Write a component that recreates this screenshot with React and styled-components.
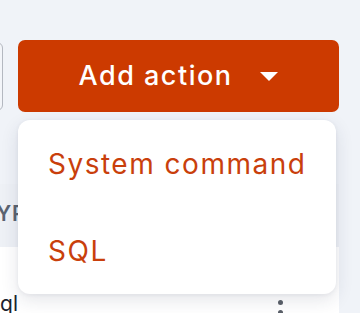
import React from "react";
import styled, { createGlobalStyle } from "styled-components";

const Global = createGlobalStyle`
  html, body { margin: 0; padding: 0; background: #f0f3f8; }
  body { font-family: Inter, "Noto Sans", sans-serif; }
`;

const Page = styled.div`
  position: relative;
  width: 360px;
  height: 313px;
  overflow: hidden;
  padding-top: 40px;
  box-sizing: border-box;
  background: #f0f3f8;
`;

const Toolbar = styled.div`
  display: flex;
  align-items: center;
  gap: 15px;
  margin-left: -97px;
`;

const GhostButton = styled.button`
  width: 100px;
  height: 69px;
  border: 1px solid #b4b8c0;
  border-radius: 6px;
  background: #f3f5f9;
`;

const PrimaryButton = styled.button`
  width: 321px;
  height: 72px;
  border: none;
  border-radius: 7px;
  background: #cc3a00;
  color: #fff;
  display: flex;
  align-items: center;
  justify-content: center;
  gap: 28px;
  font-family: Inter, "Noto Sans", sans-serif;
  font-size: 27px;
  font-weight: 500;
  letter-spacing: 1.5px;
  padding: 0 0 2px 0;
`;

const Caret = styled.span`
  width: 0;
  height: 0;
  border-left: 9px solid transparent;
  border-right: 9px solid transparent;
  border-top: 9px solid #fff;
  margin-top: 2px;
`;

const Menu = styled.div`
  position: absolute;
  top: 120px;
  left: 18px;
  width: 318px;
  background: #fff;
  border-radius: 12px;
  box-shadow: 0 6px 18px rgba(30, 40, 70, 0.12), 0 1px 4px rgba(30, 40, 70, 0.06);
  display: flex;
  flex-direction: column;
  z-index: 2;
`;

const MenuItem = styled.div`
  height: 87px;
  display: flex;
  align-items: center;
  padding-left: 30px;
  color: #c93f0c;
  font-size: 28px;
  letter-spacing: 1.5px;
`;

const Table = styled.div`
  margin-top: 72px;
  margin-left: -40px;
  width: 379px;
`;

const HeaderRow = styled.div`
  height: 63px;
  background: #eef1f6;
  display: flex;
  align-items: center;
  padding-left: 21px;
  padding-bottom: 4px;
  box-sizing: border-box;
  font-size: 21px;
  font-weight: 600;
  letter-spacing: 1px;
  color: #5b6371;
`;

const Row = styled.div`
  height: 80px;
  background: #fff;
  display: flex;
  align-items: flex-start;
  padding-left: 29px;
  padding-top: 44px;
  box-sizing: border-box;
  font-size: 21px;
  color: #1b2330;
`;

const Cell = styled.div`
  flex: 1;
`;

const Kebab = styled.div`
  display: flex;
  flex-direction: column;
  gap: 5px;
  margin-right: 56px;
  margin-top: 9px;
  span {
    width: 5px;
    height: 5px;
    border-radius: 50%;
    background: #5a5f68;
  }
`;

export default function App() {
  return (
    <>
      <Global />
      <Page>
        <Toolbar>
          <GhostButton />
          <PrimaryButton>
            <span>Add action</span>
            <Caret />
          </PrimaryButton>
        </Toolbar>
        <Menu>
          <MenuItem>System command</MenuItem>
          <MenuItem>SQL</MenuItem>
        </Menu>
        <Table>
          <HeaderRow>TYPE</HeaderRow>
          <Row>
            <Cell>sql</Cell>
            <Kebab>
              <span />
              <span />
              <span />
            </Kebab>
          </Row>
        </Table>
      </Page>
    </>
  );
}
